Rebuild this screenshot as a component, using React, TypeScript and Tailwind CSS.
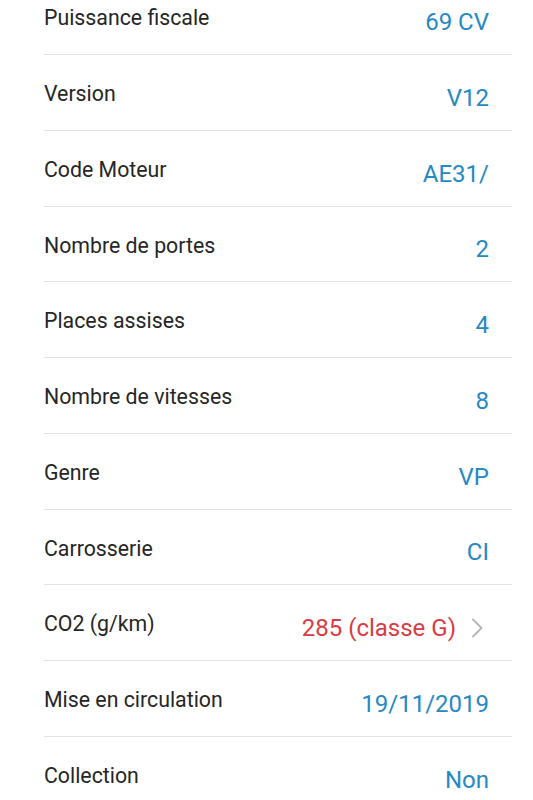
const rows = [
  { label: "Puissance fiscale", value: "69 CV" },
  { label: "Version", value: "V12" },
  { label: "Code Moteur", value: "AE31/" },
  { label: "Nombre de portes", value: "2" },
  { label: "Places assises", value: "4" },
  { label: "Nombre de vitesses", value: "8" },
  { label: "Genre", value: "VP" },
  { label: "Carrosserie", value: "CI" },
  { label: "CO2 (g/km)", value: "285 (classe G)", alert: true },
  { label: "Mise en circulation", value: "19/11/2019" },
  { label: "Collection", value: "Non" },
];

const chevRight = (
  <svg className="w-6 h-6 ml-[9px] mt-[2px]" viewBox="0 0 24 24" fill="none" stroke="#b5b5b5" strokeWidth={1.8} strokeLinecap="round" strokeLinejoin="round">
    <path d="M8 3.5l8.5 8.5-8.5 8.5" />
  </svg>
);

export default function App() {
  return (
    <div className="h-[800px] overflow-hidden bg-white font-['Roboto',sans-serif]">
      <div className="pl-[44px] pr-[21px] -mt-[20.78px]">
        {rows.map((r, i) => (
          <div
            key={i}
            className="h-[75.78px] flex justify-between items-start border-b border-[#e3e3e3]"
          >
            <span className="pt-[26px] text-[21.3px] leading-[25px] text-[#262626]">{r.label}</span>
            <div className="flex items-start pr-[23px] pt-[28.8px]">
              <span
                className={`text-[24px] leading-[28px] ${r.alert ? "text-[#d83b42]" : "text-[#2589c4]"}`}
              >
                {r.value}
              </span>
              {r.alert && chevRight}
            </div>
          </div>
        ))}
      </div>
    </div>
  );
}
